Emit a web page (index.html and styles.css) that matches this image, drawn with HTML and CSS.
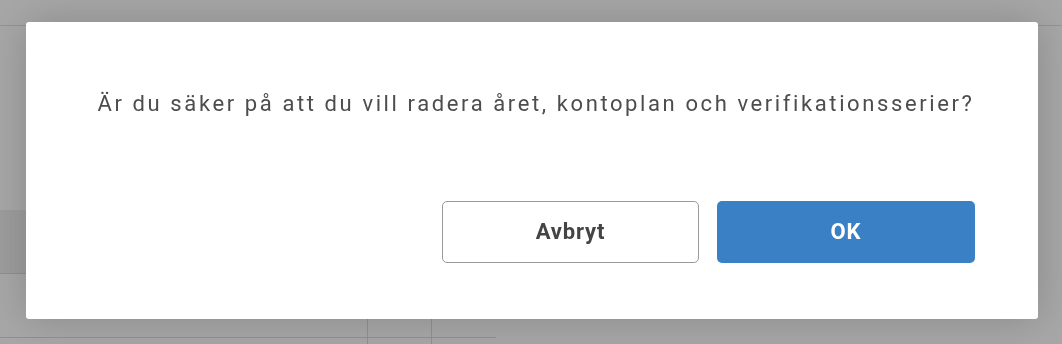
FILE: index.html
```html
<!DOCTYPE html>
<html lang="sv">
<head>
<meta charset="utf-8">
<title>Radera år</title>
<link rel="stylesheet" href="styles.css">
</head>
<body>
<div class="page">
  <div class="topbar"></div>
  <div class="spacer"></div>
  <div class="table">
    <div class="row head"><div class="c1"></div><div class="c2"></div><div class="c3"></div></div>
    <div class="row"><div class="c1"></div><div class="c2"></div><div class="c3"></div></div>
    <div class="row"><div class="c1"></div><div class="c2"></div><div class="c3"></div></div>
  </div>
</div>
<div class="overlay"></div>
<div class="dialog" role="dialog">
  <p class="message">Är du säker på att du vill radera året, kontoplan och verifikationsserier?</p>
  <div class="actions">
    <button class="btn btn-cancel">Avbryt</button>
    <button class="btn btn-ok">OK</button>
  </div>
</div>
</body>
</html>
```
FILE: styles.css
```css
html, body {
  margin: 0;
  padding: 0;
  width: 1062px;
  height: 344px;
  overflow: hidden;
  background: #fff;
  font-family: Roboto, "Liberation Sans", sans-serif;
}
.page {
  width: 1062px;
  height: 344px;
  overflow: hidden;
}
.topbar {
  box-sizing: border-box;
  height: 26px;
  border-bottom: 1px solid #e0e0e0;
}
.spacer {
  height: 184px;
}
.table {
  width: 496px;
}
.row {
  display: grid;
  grid-template-columns: 367px 64px 65px;
  height: 63px;
  border-bottom: 1px solid #dcdcdc;
}
.row.head {
  background: #f0f0f0;
}
.row > div + div {
  border-left: 1px solid #dcdcdc;
}
.overlay {
  position: fixed;
  inset: 0;
  background: rgba(0, 0, 0, 0.35);
}
.dialog {
  position: fixed;
  top: 22px;
  left: 26px;
  width: 1012px;
  height: 297px;
  box-sizing: border-box;
  background: #fff;
  border-radius: 3px;
  box-shadow: 0 0 40px rgba(0, 0, 0, 0.18);
  padding: 68px 63px 56px 71px;
  display: flex;
  flex-direction: column;
}
.message {
  margin: 0;
  font-size: 22px;
  line-height: 28px;
  color: #4d4d4d;
  letter-spacing: 2.6px;
  text-align: center;
  white-space: nowrap;
}
.actions {
  margin-top: auto;
  display: flex;
  justify-content: flex-end;
  gap: 18px;
}
.btn {
  height: 62px;
  border-radius: 5px;
  font-family: Roboto, "Liberation Sans", sans-serif;
  font-weight: 700;
  font-size: 22px;
  letter-spacing: 0.8px;
  padding: 0 0 2px 0;
  cursor: pointer;
}
.btn-cancel {
  width: 257px;
  background: #fff;
  border: 1px solid #9a9a9a;
  color: #444;
}
.btn-ok {
  width: 258px;
  background: #3a80c4;
  border: none;
  color: #fff;
}
```
